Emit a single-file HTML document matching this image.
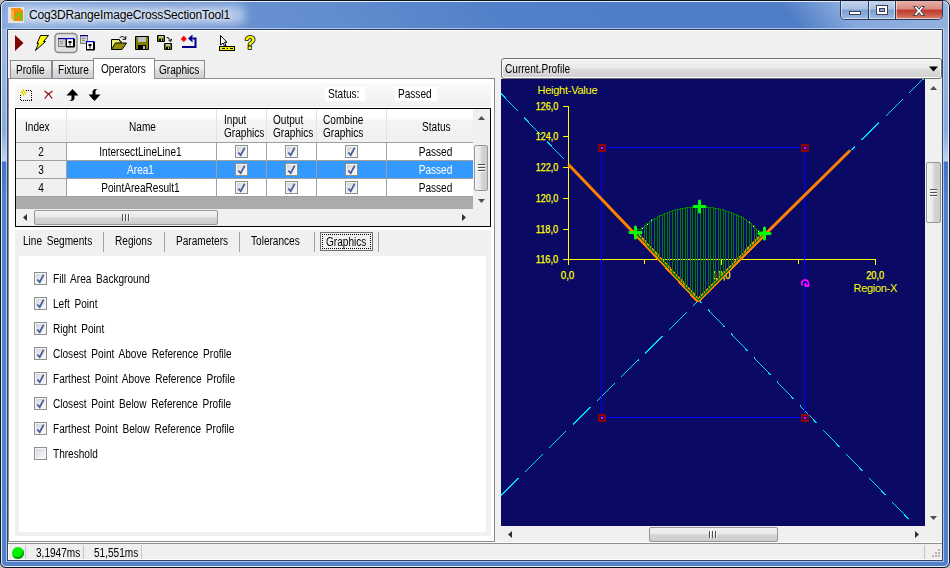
<!DOCTYPE html>
<html>
<head>
<meta charset="utf-8">
<title>Cog3DRangeImageCrossSectionTool1</title>
<style>
*{box-sizing:border-box;margin:0;padding:0}
html,body{width:950px;height:568px;overflow:hidden;background:#bdbdbd}
body{font-family:"Liberation Sans",sans-serif;font-size:11px;color:#000;position:relative}
div,span,svg{position:absolute}
.t{white-space:nowrap;line-height:13px;font-size:12px;letter-spacing:0;word-spacing:2.3px;transform:scaleX(.84);transform-origin:0 0}
#win{left:0;top:0;width:950px;height:568px;border:1px solid #0c1424;border-radius:7px 7px 6px 6px;overflow:hidden;
 background:linear-gradient(180deg,#a2bce5 0px,#9ab5e2 60px,#8aabde 130px,#c0d2ee 160px,#4475c5 161px,#5482ca 200px,#5381c9 568px)}
#winhl{left:1px;top:1px;width:948px;height:566px;border:1px solid #e4eefb;border-radius:6px 6px 5px 5px}
#titlebar{left:1px;top:1px;width:946px;height:27px;
 background:linear-gradient(52deg,#86a8dc 1%,#6c94d3 13.4%,#628dcf 35%,#5280c8 52.7%,#4f7dc5 82.5%,#86a8dd 88.5%,#93b2e0 99%)}
#title{left:29px;top:8px;font-size:12px;line-height:15px;white-space:nowrap;color:#000;letter-spacing:-0.16px;text-shadow:0 0 4px rgba(255,255,255,.9),0 0 7px rgba(255,255,255,.8)}
#tglow{left:10px;top:5px;width:236px;height:20px;border-radius:10px;background:rgba(255,255,255,.5);filter:blur(5px)}
#client{left:7px;top:29px;width:936px;height:532px;background:#f0f0f0;border:1px solid #34456a;border-top-color:#2e4060;box-shadow:0 0 0 1px rgba(200,218,244,.75)}
#ctop{left:8px;top:30px;width:934px;height:1px;background:#fff}
/* caption buttons */
#capbtns{left:840px;top:1px;width:103px;height:19px;border:1px solid #2a3a5a;border-top:none;border-radius:0 0 5px 5px;overflow:hidden}
.cb{top:0;height:18px;border-left:1px solid #2a3a5a}
#cbmin{left:0;width:28px;border-left:none;background:linear-gradient(180deg,#c4d4ec 0,#a9c0e4 8px,#7e9fd3 9px,#9db9e2 18px)}
#cbmax{left:27px;width:27px;background:linear-gradient(180deg,#c4d4ec 0,#a9c0e4 8px,#7e9fd3 9px,#9db9e2 18px)}
#cbclose{left:54px;width:48px;background:linear-gradient(180deg,#e7b0a8 0,#d78c82 8px,#c1392b 9px,#c85a48 14px,#d98a72 18px)}
.cbhl{left:0;top:0;right:0;bottom:0;border:1px solid rgba(255,255,255,.55);border-top:none}
/* tabs */
.tab{top:60px;height:19px;border:1px solid #898c95;border-bottom:none;background:linear-gradient(180deg,#f2f2f2 0,#ebebeb 8px,#dddddd 9px,#cfcfcf 18px)}
.tab .t{top:3px}
#tabsel{top:58px;height:21px;background:#fff;z-index:3}
#tabpage{left:8px;top:78px;width:487px;height:464px;background:#fff;border:1px solid #898c95}
#tstrip{left:15px;top:83px;width:476px;height:24px;background:linear-gradient(180deg,#fafafa,#f0f0f0);border-radius:3px 0 0 3px}
.lblw{background:#fff;height:14px;top:87px}
/* grid */
#grid{left:15px;top:108px;width:476px;height:119px;border:1px solid #000;background:#ababab;overflow:hidden}
#ghead{left:0;top:0;width:457px;height:34px;background:linear-gradient(180deg,#fff 0,#fff 10px,#f4f4f4 11px,#f0f0f0 32px);border-bottom:1px solid #a0a0a0}
.gh{top:0;height:33px;border-right:1px solid #e3e3e3}
.gh .t{line-height:13px}
.gr{left:0;width:457px;height:18px;background:#fff;border-bottom:1px solid #a0a0a0}
.gc{top:0;height:17px;border-right:1px solid #a0a0a0;text-align:center}
.gc .t{left:0;right:0;top:3px;text-align:center;transform-origin:50% 0}
.gidx{background:#f0f0f0}
.sel .gc{background:#3399ff;color:#fff}
.sel .gidx{background:#f0f0f0;color:#000}
.cbx{width:13px;height:13px;border:1px solid #8e8f8f;background:linear-gradient(135deg,#d8dce0 0,#f4f6f8 60%,#fff 100%);box-shadow:inset 0 0 0 1px #f4f4f4}
.cbx i{position:absolute;left:1px;top:1px;width:9px;height:9px;background:linear-gradient(135deg,#cfd3d9 0,#e6e8ec 45%,#f8f9fa 100%)}
.cbx svg{left:0;top:0;width:11px;height:11px}
.sb{background:#f0f0f0}
.thumb{border:1px solid #979797;border-radius:2px;background:linear-gradient(90deg,#f3f3f3 0,#e8e8e8 45%,#d4d4d4 55%,#cdcdcd 100%)}
.thumbh{border:1px solid #979797;border-radius:2px;background:linear-gradient(180deg,#f3f3f3 0,#e8e8e8 45%,#d4d4d4 55%,#cdcdcd 100%)}
/* inner tab */
#itab{left:15px;top:230px;width:476px;height:306px;background:#f0f0f0}
#ipage{left:19px;top:256px;width:467px;height:276px;background:#fff}
.isep{top:232px;width:1px;height:20px;background:#a0a0a0}
.row{left:34px;height:13px}
.row .t{left:19px;top:1px}
/* right */
#combo{left:501px;top:58px;width:441px;height:21px;border:1px solid #707070;border-radius:3px;background:linear-gradient(180deg,#f2f2f2 0,#ebebeb 9px,#dddddd 10px,#cfcfcf 19px);box-shadow:inset 0 0 0 1px #fcfcfc}
#graph{left:501px;top:79px;width:424px;height:447px;background:#0a0a64;overflow:hidden}
#status{left:8px;top:544px;width:934px;height:16px;background:#f0eeee;box-shadow:inset 1px 0 0 #fff,inset 0 -1px 0 #fff}
</style>
</head>
<body>
<div id="win"><div id="titlebar"></div></div>
<div id="winhl"></div>
<div id="tglow"></div>
<div id="title">Cog3DRangeImageCrossSectionTool1</div>
<div id="client"></div><div id="ctop"></div>

<!-- caption buttons -->
<div id="capbtns">
 <div class="cb" id="cbmin"><div class="cbhl"></div></div>
 <div class="cb" id="cbmax"><div class="cbhl"></div></div>
 <div class="cb" id="cbclose"><div class="cbhl"></div></div>
</div>
<svg id="capicons" style="left:840px;top:1px" width="103" height="20" viewBox="0 0 103 20">
 <rect x="9.5" y="10.5" width="11" height="3" fill="#fff" stroke="#3a4250" stroke-width="1"/>
 <rect x="36.500" y="4.500" width="11" height="9" fill="#fff" stroke="#3a4250"/>
 <rect x="39.500" y="7.500" width="5" height="3" fill="#8aa6d4" stroke="#3a4250"/>
 <path d="M73.500 5.500h3.200l2.300 2.700l2.300-2.700h3.200l-3.800 4.300l4 4.700h-3.300l-2.400-3l-2.400 3h-3.300l4-4.700z" fill="#fff" stroke="#3a4250" stroke-width="1"/>
</svg>

<!-- app icon -->
<svg id="appicon" style="left:8px;top:7px" width="16" height="16" viewBox="0 0 16 16">
 <rect width="16" height="16" fill="#e4e4e4"/>
 <path d="M3 1h9l3 3v10H6L3 11z" fill="#f08a00"/>
 <path d="M3 1l3 3v10L3 11z" fill="#ffb040"/>
 <path d="M3 1h9l3 3H6z" fill="#f59010"/>
 <path d="M6.500 12.500l3-5.500h4v6h1.500" fill="none" stroke="#00ff20" stroke-width="1.100"/>
</svg>

<!-- toolbar -->
<svg id="tb" style="left:8px;top:30px" width="300" height="28" viewBox="8 30 300 28">
 <!-- run -->
 <path d="M15 35l8.500 8l-8.500 8z" fill="#800000"/>
 <!-- lightning -->
 <path d="M40.500 35.500h8l-5 6h2l-10 9l3-7h-1.500z" fill="#ffff00" stroke="#000" stroke-width="1" stroke-linejoin="miter"/>
 <!-- pressed button -->
 <rect x="55" y="33.500" width="22" height="19" rx="3.500" fill="#e0e0e0" stroke="#8a8a8a" stroke-width="1.400"/>
 <!-- two windows -->
 <rect x="58.500" y="38.500" width="7" height="8" fill="#d0d0d0" stroke="#808080"/>
 <rect x="58" y="38" width="8" height="1.200" fill="#000090"/>
 <rect x="60" y="41" width="3" height="1" fill="#909090"/><rect x="60" y="43" width="3" height="1" fill="#909090"/>
 <rect x="66.500" y="38.500" width="7" height="8" fill="#fff" stroke="#000"/>
 <path d="M66 47h8.500v-8" stroke="#000" fill="none"/>
 <rect x="66" y="38" width="8.500" height="1.200" fill="#0000e0"/>
 <path d="M68.500 41h3v2h-1v2.500h-1v-2.500h-1z" fill="#000"/>
 <!-- cascaded -->
 <rect x="80.500" y="35.500" width="7" height="8" fill="#d0d0d0" stroke="#808080"/>
 <rect x="80" y="35" width="8" height="1.200" fill="#000090"/>
 <rect x="82" y="38" width="3" height="1" fill="#909090"/><rect x="82" y="40" width="3" height="1" fill="#909090"/>
 <rect x="86.500" y="41.500" width="7" height="8" fill="#fff" stroke="#000"/>
 <path d="M86 50h8.500v-8" stroke="#000" fill="none"/>
 <rect x="86" y="41" width="8.500" height="1.200" fill="#0000e0"/>
 <path d="M88.500 44h3v2h-1v2.500h-1v-2.500h-1z" fill="#000"/>
 <!-- open -->
 <path d="M111.500 49.500v-10h8v1.500h1.500v2" fill="#e8e870" stroke="#000"/>
 <path d="M111.500 49.500l4-6.500h11l-4.500 6.500z" fill="#909000" stroke="#000"/>
 <path d="M119.500 38c1.500-2 4.500-2 5.500.5m.8-2.500v3.300h-3.300" fill="none" stroke="#000"/>
 <!-- save -->
 <path d="M135.500 36.500h13v13h-13z" fill="#808000" stroke="#000"/>
 <rect x="138" y="37" width="8" height="5" fill="#c0c0c0"/>
 <rect x="138" y="45" width="8" height="4" fill="#000"/>
 <rect x="143" y="46" width="2" height="3" fill="#c0c0c0"/>
 <!-- save all -->
 <path d="M157.500 35.500h7v6h-7z" fill="#808000" stroke="#000"/>
 <rect x="159" y="36" width="4" height="2" fill="#c0c0c0"/><rect x="159" y="39" width="4" height="2" fill="#000"/><rect x="161" y="39" width="1" height="2" fill="#c0c0c0"/>
 <path d="M164.500 43.500h7v6h-7z" fill="#808000" stroke="#000"/>
 <rect x="166" y="44" width="4" height="2" fill="#c0c0c0"/><rect x="166" y="47" width="4" height="2" fill="#000"/><rect x="168" y="47" width="1" height="2" fill="#c0c0c0"/>
 <path d="M166.500 37.500c2 0 3.500 1 4 3m-2.200-.5l2.400 1.500l1-2.500" fill="none" stroke="#000"/>
 <!-- record/back -->
 <path d="M183.800 35.800l3.100 3.100l-3.100 3.100l-3.100-3.100z" fill="#ff0000"/>
 <path d="M182 47h13.500v-8.500h-3" fill="none" stroke="#000090" stroke-width="2"/>
 <path d="M188 38.500l4.500-4v8z" fill="#000090"/>
 <!-- cursor ruler -->
 <path d="M220.500 35.500v9.500l2.500-2l1.500 3l1.500-.7l-1.500-3h2.500z" fill="#fff" stroke="#000"/>
 <rect x="219.500" y="46.500" width="15" height="4" fill="#f0f000" stroke="#000"/>
 <path d="M222 48.500h3m2 0h1m2 0h3" stroke="#000"/>
 <!-- help -->
 <text x="244.800" y="49.200" font-family="Liberation Sans, sans-serif" font-weight="bold" font-size="17.500" fill="#ffff00" stroke="#000" stroke-width="1.700" paint-order="stroke" stroke-linejoin="round">?</text>
</svg>

<!-- tabs -->
<div class="tab" style="left:10px;width:42px"><span class="t" style="left:5px">Profile</span></div>
<div class="tab" style="left:52px;width:43px"><span class="t" style="left:5px">Fixture</span></div>
<div class="tab" style="left:154px;width:51px"><span class="t" style="left:4px">Graphics</span></div>
<div id="tabpage"></div>
<div class="tab" id="tabsel" style="left:93px;width:62px"><span class="t" style="left:7px;top:4px">Operators</span></div>

<div id="tstrip"></div>
<svg id="tsicons" style="left:15px;top:84px" width="100" height="22" viewBox="15 84 100 22">
 <!-- new -->
 <path d="M26 90.500h6M31.500 91v10M32 100.500h-12M20.500 100v-5" fill="none" stroke="#000" stroke-dasharray="1 1"/>
 <path d="M23.500 89v7M20 92.500h7M21 90l5 5M26 90l-5 5" stroke="#e4dc00" stroke-width="1"/>
 <rect x="23" y="92" width="1" height="1" fill="#fff"/>
 <!-- x -->
 <path d="M44.500 91c2.800 1.700 5.500 4 7.700 7.500M52.500 91c-2.800 1.700-5.500 4-7.700 7.500" stroke="#8a0000" stroke-width="1.200" fill="none"/>
 <!-- up -->
 <path d="M72.500 89l6 6.500h-4v2c0 2-1 3.500-3.500 3.500h-2.500c2 0 3-1 3-2.500v-3h-5z" fill="#000"/>
 <!-- down -->
 <path d="M94.500 101l-6-6.500h4v-2c0-2 1-3.500 3.500-3.500h2.500c-2 0-3 1-3 2.500v3h5z" fill="#000"/>
</svg>
<div class="lblw" style="left:325px;width:40px"><span class="t" style="left:3px;top:1px">Status:</span></div>
<div class="lblw" style="left:395px;width:42px"><span class="t" style="left:3px;top:1px">Passed</span></div>

<!-- grid -->
<div id="grid">
 <div id="ghead">
  <div class="gh" style="left:0;width:51px"><span class="t" style="left:9px;top:12px">Index</span></div>
  <div class="gh" style="left:51px;width:150px"><span class="t" style="left:62px;top:12px">Name</span></div>
  <div class="gh" style="left:201px;width:50px"><span class="t" style="left:7px;top:5px">Input<br>Graphics</span></div>
  <div class="gh" style="left:251px;width:50px"><span class="t" style="left:6px;top:5px">Output<br>Graphics</span></div>
  <div class="gh" style="left:301px;width:70px"><span class="t" style="left:6px;top:5px">Combine<br>Graphics</span></div>
  <div class="gh" style="left:371px;width:86px;border-right:none"><span class="t" style="left:35px;top:12px">Status</span></div>
 </div>
 <div class="gr" style="top:34px">
  <div class="gc gidx" style="left:0;width:51px"><span class="t">2</span></div>
  <div class="gc" style="left:51px;width:150px"><span class="t" style="right:2px">IntersectLineLine1</span></div>
  <div class="gc" style="left:201px;width:50px"><div class="cbx" style="left:18px;top:2px"><i></i><svg viewBox="0 0 11 11"><path d="M2.300 6.500L4.700 9.200L8.700 1.600" fill="none" stroke="#4a5f9a" stroke-width="1.800"/></svg></div></div>
  <div class="gc" style="left:251px;width:50px"><div class="cbx" style="left:18px;top:2px"><i></i><svg viewBox="0 0 11 11"><path d="M2.300 6.500L4.700 9.200L8.700 1.600" fill="none" stroke="#4a5f9a" stroke-width="1.800"/></svg></div></div>
  <div class="gc" style="left:301px;width:70px"><div class="cbx" style="left:28px;top:2px"><i></i><svg viewBox="0 0 11 11"><path d="M2.300 6.500L4.700 9.200L8.700 1.600" fill="none" stroke="#4a5f9a" stroke-width="1.800"/></svg></div></div>
  <div class="gc" style="left:371px;width:86px;border-right:none"><span class="t" style="left:11px">Passed</span></div>
 </div>
 <div class="gr sel" style="top:52px">
  <div class="gc gidx" style="left:0;width:51px"><span class="t">3</span></div>
  <div class="gc" style="left:51px;width:150px"><span class="t" style="right:2px">Area1</span></div>
  <div class="gc" style="left:201px;width:50px"><div class="cbx" style="left:18px;top:2px"><i></i><svg viewBox="0 0 11 11"><path d="M2.300 6.500L4.700 9.200L8.700 1.600" fill="none" stroke="#4a5f9a" stroke-width="1.800"/></svg></div></div>
  <div class="gc" style="left:251px;width:50px"><div class="cbx" style="left:18px;top:2px"><i></i><svg viewBox="0 0 11 11"><path d="M2.300 6.500L4.700 9.200L8.700 1.600" fill="none" stroke="#4a5f9a" stroke-width="1.800"/></svg></div></div>
  <div class="gc" style="left:301px;width:70px"><div class="cbx" style="left:28px;top:2px"><i></i><svg viewBox="0 0 11 11"><path d="M2.300 6.500L4.700 9.200L8.700 1.600" fill="none" stroke="#4a5f9a" stroke-width="1.800"/></svg></div></div>
  <div class="gc" style="left:371px;width:86px;border-right:none"><span class="t" style="left:11px">Passed</span></div>
 </div>
 <div class="gr" style="top:70px">
  <div class="gc gidx" style="left:0;width:51px"><span class="t">4</span></div>
  <div class="gc" style="left:51px;width:150px"><span class="t" style="right:2px">PointAreaResult1</span></div>
  <div class="gc" style="left:201px;width:50px"><div class="cbx" style="left:18px;top:2px"><i></i><svg viewBox="0 0 11 11"><path d="M2.300 6.500L4.700 9.200L8.700 1.600" fill="none" stroke="#4a5f9a" stroke-width="1.800"/></svg></div></div>
  <div class="gc" style="left:251px;width:50px"><div class="cbx" style="left:18px;top:2px"><i></i><svg viewBox="0 0 11 11"><path d="M2.300 6.500L4.700 9.200L8.700 1.600" fill="none" stroke="#4a5f9a" stroke-width="1.800"/></svg></div></div>
  <div class="gc" style="left:301px;width:70px"><div class="cbx" style="left:28px;top:2px"><i></i><svg viewBox="0 0 11 11"><path d="M2.300 6.500L4.700 9.200L8.700 1.600" fill="none" stroke="#4a5f9a" stroke-width="1.800"/></svg></div></div>
  <div class="gc" style="left:371px;width:86px;border-right:none"><span class="t" style="left:11px">Passed</span></div>
 </div>
 <!-- vscroll -->
 <div class="sb" style="left:457px;top:0;width:17px;height:100px">
  <div class="thumb" style="left:1px;top:36px;width:14px;height:46px"></div>
  <svg style="left:0;top:0" width="17" height="100" viewBox="0 0 17 100"><path d="M5 11l3.500-4l3.500 4z M5 90l3.500 4l3.500-4z" fill="#505050"/><path d="M5 55.500h7M5 58.500h7M5 61.500h7" stroke="#505050"/><path d="M5 56.500h7M5 59.500h7M5 62.500h7" stroke="#fafafa"/></svg>
 </div>
 <!-- hscroll -->
 <div class="sb" style="left:0;top:100px;width:474px;height:17px">
  <div class="thumbh" style="left:18px;top:1px;width:184px;height:15px"></div>
  <svg style="left:0;top:0" width="474" height="17" viewBox="0 0 474 17"><path d="M11 5l-4 3.500l4 3.500z M446 5l4 3.500l-4 3.500z" fill="#303030"/><path d="M106.500 5v7M109.500 5v7M112.500 5v7" stroke="#505050"/><path d="M107.500 5v7M110.500 5v7M113.500 5v7" stroke="#fafafa"/></svg>
 </div>
</div>

<!-- inner tab -->
<div id="itab"></div>
<div id="ipage"></div>
<span class="t" style="left:23px;top:235px">Line Segments</span>
<div class="isep" style="left:103px"></div>
<span class="t" style="left:115px;top:235px">Regions</span>
<div class="isep" style="left:164px"></div>
<span class="t" style="left:176px;top:235px">Parameters</span>
<div class="isep" style="left:239px"></div>
<span class="t" style="left:251px;top:235px">Tolerances</span>
<div class="isep" style="left:314px"></div>
<div style="left:320px;top:232px;width:53px;height:19px;border:1px solid #707070;background:#f0f0f0"><div style="left:1px;top:1px;right:1px;bottom:1px;border:1px dotted #000"></div></div>
<span class="t" style="left:326px;top:236px">Graphics</span>
<div class="isep" style="left:378px"></div>

<div class="row" style="top:272px"><div class="cbx"><i></i><svg viewBox="0 0 11 11"><path d="M2.300 6.500L4.700 9.200L8.700 1.600" fill="none" stroke="#4a5f9a" stroke-width="1.800"/></svg></div><span class="t">Fill Area Background</span></div>
<div class="row" style="top:297px"><div class="cbx"><i></i><svg viewBox="0 0 11 11"><path d="M2.300 6.500L4.700 9.200L8.700 1.600" fill="none" stroke="#4a5f9a" stroke-width="1.800"/></svg></div><span class="t">Left Point</span></div>
<div class="row" style="top:322px"><div class="cbx"><i></i><svg viewBox="0 0 11 11"><path d="M2.300 6.500L4.700 9.200L8.700 1.600" fill="none" stroke="#4a5f9a" stroke-width="1.800"/></svg></div><span class="t">Right Point</span></div>
<div class="row" style="top:347px"><div class="cbx"><i></i><svg viewBox="0 0 11 11"><path d="M2.300 6.500L4.700 9.200L8.700 1.600" fill="none" stroke="#4a5f9a" stroke-width="1.800"/></svg></div><span class="t">Closest Point Above Reference Profile</span></div>
<div class="row" style="top:372px"><div class="cbx"><i></i><svg viewBox="0 0 11 11"><path d="M2.300 6.500L4.700 9.200L8.700 1.600" fill="none" stroke="#4a5f9a" stroke-width="1.800"/></svg></div><span class="t">Farthest Point Above Reference Profile</span></div>
<div class="row" style="top:397px"><div class="cbx"><i></i><svg viewBox="0 0 11 11"><path d="M2.300 6.500L4.700 9.200L8.700 1.600" fill="none" stroke="#4a5f9a" stroke-width="1.800"/></svg></div><span class="t">Closest Point Below Reference Profile</span></div>
<div class="row" style="top:422px"><div class="cbx"><i></i><svg viewBox="0 0 11 11"><path d="M2.300 6.500L4.700 9.200L8.700 1.600" fill="none" stroke="#4a5f9a" stroke-width="1.800"/></svg></div><span class="t">Farthest Point Below Reference Profile</span></div>
<div class="row" style="top:447px"><div class="cbx"><i></i></div><span class="t">Threshold</span></div>

<!-- right panel -->
<div id="combo"><span class="t" style="left:3px;top:4px">Current.Profile</span>
 <svg style="left:427px;top:7px" width="9" height="6" viewBox="0 0 9 6"><path d="M0 0.500h9l-4.500 5z" fill="#000"/></svg>
</div>
<div id="graph">
<svg id="gsvg" style="left:0;top:0" width="424" height="447" viewBox="501 79 424 447" font-family="Liberation Sans, sans-serif" font-size="11">
<g shape-rendering="crispEdges" fill="none">
<line x1="501" y1="93.5" x2="925" y2="536.2" stroke="#00dcff" stroke-width="1" stroke-dasharray="24.2 9.03"/>
<line x1="501" y1="495.4" x2="930" y2="72.4" stroke="#00dcff" stroke-width="1" stroke-dasharray="24.6 9.15"/>
<path d="M568.5 106v154M568 259.5h308M563 106.500h5M563 136.500h5M563 167.500h5M563 198.500h5M563 229.500h5M563 259.500h5M568.500 260v5M644.500 260v4M721.500 260v5M798.500 260v4M875.500 260v5" stroke="#ffff00" stroke-width="1"/>
<rect x="601.5" y="147.5" width="203" height="270" stroke="#0000ff" stroke-width="1"/>
</g>
<g fill="#ffff00">
<text x="537.5" y="94" font-size="11" letter-spacing="-0.25">Height-Value</text>
<text x="535.8" y="109.9" font-size="10" textLength="22.4" lengthAdjust="spacingAndGlyphs" stroke="#ffff00" stroke-width="0.25">126,0</text>
<text x="535.8" y="140.4" font-size="10" textLength="22.4" lengthAdjust="spacingAndGlyphs" stroke="#ffff00" stroke-width="0.25">124,0</text>
<text x="535.8" y="171.4" font-size="10" textLength="22.4" lengthAdjust="spacingAndGlyphs" stroke="#ffff00" stroke-width="0.25">122,0</text>
<text x="535.8" y="202.4" font-size="10" textLength="22.4" lengthAdjust="spacingAndGlyphs" stroke="#ffff00" stroke-width="0.25">120,0</text>
<text x="535.8" y="233.4" font-size="10" textLength="22.4" lengthAdjust="spacingAndGlyphs" stroke="#ffff00" stroke-width="0.25">118,0</text>
<text x="535.8" y="263.4" font-size="10" textLength="22.4" lengthAdjust="spacingAndGlyphs" stroke="#ffff00" stroke-width="0.25">116,0</text>
<text x="560.7" y="279.2" font-size="10" textLength="13.6" lengthAdjust="spacingAndGlyphs" stroke="#ffff00" stroke-width="0.25">0,0</text>
<text x="712.5" y="279.2" font-size="10" textLength="18.0" lengthAdjust="spacingAndGlyphs" stroke="#ffff00" stroke-width="0.25">10,0</text>
<text x="866.2" y="279.2" font-size="10" textLength="18.0" lengthAdjust="spacingAndGlyphs" stroke="#ffff00" stroke-width="0.25">20,0</text>
<text x="853.5" y="292" font-size="11" letter-spacing="-0.3">Region-X</text>
</g>
<path d="M568.5 164.5L698.2 300.3L850 150.5" fill="none" stroke="#ff8000" stroke-width="3" stroke-linejoin="bevel"/>
<path d="M636.6 234.0L698.2 300.6L763.4 234.5" fill="none" stroke="#ff8000" stroke-width="4.4" stroke-linejoin="bevel" shape-rendering="crispEdges"/>
<path d="M638.5 230.5V236.1M641.5 228.5V239.4M644.5 226.5V242.6M646.5 225.5V244.8M649.5 222.5V248.1M651.5 220.5V250.2M654.5 218.5V253.5M657.5 217.5V256.7M659.5 216.5V258.9M662.5 215.5V262.1M664.5 214.5V264.3M667.5 213.5V267.5M669.5 212.5V269.7M672.5 211.5V273.0M675.5 210.5V276.2M677.5 209.5V278.4M680.5 208.5V281.6M682.5 208.5V283.8M685.5 207.5V287.0M687.5 207.5V289.2M690.5 207.5V292.5M692.5 207.5V294.6M695.5 207.5V297.9M697.5 206.5V300.0M700.5 206.5V298.5M703.5 207.5V295.4M705.5 207.5V293.4M708.5 207.5V290.3M710.5 207.5V288.3M713.5 208.5V285.2M715.5 208.5V283.2M718.5 209.5V280.2M720.5 209.5V278.1M723.5 210.5V275.1M725.5 210.5V273.0M728.5 211.5V270.0M731.5 212.5V266.9M733.5 213.5V264.9M736.5 214.5V261.9M738.5 215.5V259.8M741.5 217.5V256.8M743.5 218.5V254.7M746.5 220.5V251.7M749.5 222.5V248.6M751.5 224.5V246.6M754.5 227.5V243.6M756.5 229.5V241.5M759.5 231.5V238.5M762.5 232.5V235.4" stroke="#008000" stroke-width="1" fill="none" shape-rendering="crispEdges"/>
<path d="M636.6 231.5V229.5H641.5V227.5H644.5V225.5H646.5V223.5H649.5V221.5H651.5V219.5H654.5V218.5H657.5V216.5H659.5V215.5H662.5V214.5H664.5V213.5H667.5V212.5H669.5V211.5H672.5V210.5H675.5V209.5H677.5V209.5H680.5V208.5H682.5V208.5H685.5V207.5H687.5V207.5H690.5V207.5H692.5V207.5H695.5V206.5H697.5V206.5H700.5V206.5H703.5V207.5H705.5V207.5H708.5V207.5H710.5V207.5H713.5V208.5H715.5V208.5H718.5V209.5H720.5V209.5H723.5V210.5H725.5V211.5H728.5V212.5H731.5V213.5H733.5V214.5H736.5V215.5H738.5V216.5H741.5V217.5H743.5V219.5H746.5V221.5H749.5V223.5H751.5V225.5H754.5V228.5H756.5V230.5H759.5V231.5H762.5L763.4 232.0" stroke="#008000" stroke-width="1" fill="none" shape-rendering="crispEdges"/>
<path d="M636.6 234.0L698.2 300.4L763.4 234.5" stroke="#008000" stroke-width="1.1" fill="none" shape-rendering="crispEdges"/>
<rect x="642" y="228" width="1" height="1" fill="#fff"/>
<rect x="647" y="224" width="1" height="1" fill="#fff"/>
<rect x="651" y="220" width="1" height="1" fill="#fff"/>
<rect x="749" y="222" width="1" height="1" fill="#fff"/>
<rect x="753" y="226" width="1" height="1" fill="#fff"/>
<rect x="758" y="231" width="1" height="1" fill="#fff"/>
<rect x="598" y="144" width="8" height="8" fill="#900000"/><rect x="600" y="146" width="4" height="4" fill="#0a0a80"/><rect x="601" y="147" width="2" height="2" fill="#ff00ff"/>
<rect x="801" y="144" width="8" height="8" fill="#900000"/><rect x="803" y="146" width="4" height="4" fill="#0a0a80"/><rect x="804" y="147" width="2" height="2" fill="#ff00ff"/>
<rect x="598" y="414" width="8" height="8" fill="#900000"/><rect x="600" y="416" width="4" height="4" fill="#0a0a80"/><rect x="601" y="417" width="2" height="2" fill="#ff00ff"/>
<rect x="801" y="414" width="8" height="8" fill="#900000"/><rect x="803" y="416" width="4" height="4" fill="#0a0a80"/><rect x="804" y="417" width="2" height="2" fill="#ff00ff"/>
<path d="M630.0 232.5h11M635.5 227.0v11" stroke="#00ff00" stroke-width="3" stroke-linecap="round" fill="none"/>
<path d="M694.0 206.5h11M699.5 201.0v11" stroke="#00ff00" stroke-width="3" stroke-linecap="round" fill="none"/>
<path d="M759.0 233.5h11M764.5 228.0v11" stroke="#00ff00" stroke-width="3" stroke-linecap="round" fill="none"/>
<path d="M802.5 285.500c-1.800-2-.5-5.500 2.500-5.500s4.500 3 3 5.500M805 286h4.500M805.500 283v3" stroke="#ff00ff" stroke-width="1.800" fill="none"/>
</svg>
</div>
<!-- graph v scroll -->
<div class="sb" style="left:925px;top:79px;width:17px;height:447px">
 <div class="thumb" style="left:1px;top:83px;width:15px;height:61px"></div>
 <svg style="left:0;top:0" width="17" height="447" viewBox="0 0 17 447"><path d="M5 11l3.500-4l3.500 4z M5 437l3.500 4l3.500-4z" fill="#505050"/><path d="M5 110.500h7M5 113.500h7M5 116.500h7" stroke="#505050"/><path d="M5 111.500h7M5 114.500h7M5 117.500h7" stroke="#fafafa"/></svg>
</div>
<!-- graph h scroll -->
<div class="sb" style="left:501px;top:526px;width:441px;height:17px">
 <div class="thumbh" style="left:148px;top:1px;width:129px;height:15px"></div>
 <svg style="left:0;top:0" width="441" height="17" viewBox="0 0 441 17"><path d="M11 5l-4 3.500l4 3.500z M414 5l4 3.500l-4 3.500z" fill="#303030"/><path d="M208.500 5v7M211.500 5v7M214.500 5v7" stroke="#505050"/><path d="M209.500 5v7M212.500 5v7M215.500 5v7" stroke="#fafafa"/></svg>
</div>

<!-- status bar -->
<div style="left:8px;top:542px;width:934px;height:1px;background:#fff"></div>
<div style="left:8px;top:543px;width:934px;height:1px;background:#8e8e8e"></div>
<div id="status">
 <div style="left:4px;top:3px;width:12px;height:12px;border-radius:6px;background:#00f000;box-shadow:inset -1px -2px 0 #00a000"></div>
 <div style="left:17px;top:1px;width:1px;height:14px;background:#c8c6c6"></div>
 <span class="t" style="left:28px;top:3px">3,1947ms</span>
 <div style="left:75px;top:1px;width:1px;height:14px;background:#c8c6c6"></div>
 <span class="t" style="left:86px;top:3px">51,551ms</span>
 <div style="left:133px;top:1px;width:1px;height:14px;background:#c8c6c6"></div>
 <div style="left:916px;top:1px;width:1px;height:14px;background:#c8c6c6"></div>
 <svg style="left:922px;top:5px" width="11" height="11" viewBox="0 0 11 11"><path d="M8 0h2v2h-2zM5 3h2v2h-2zM8 3h2v2h-2zM2 6h2v2h-2zM5 6h2v2h-2zM8 6h2v2h-2z" fill="#b8b6b6"/></svg>
</div>
</body>
</html>
